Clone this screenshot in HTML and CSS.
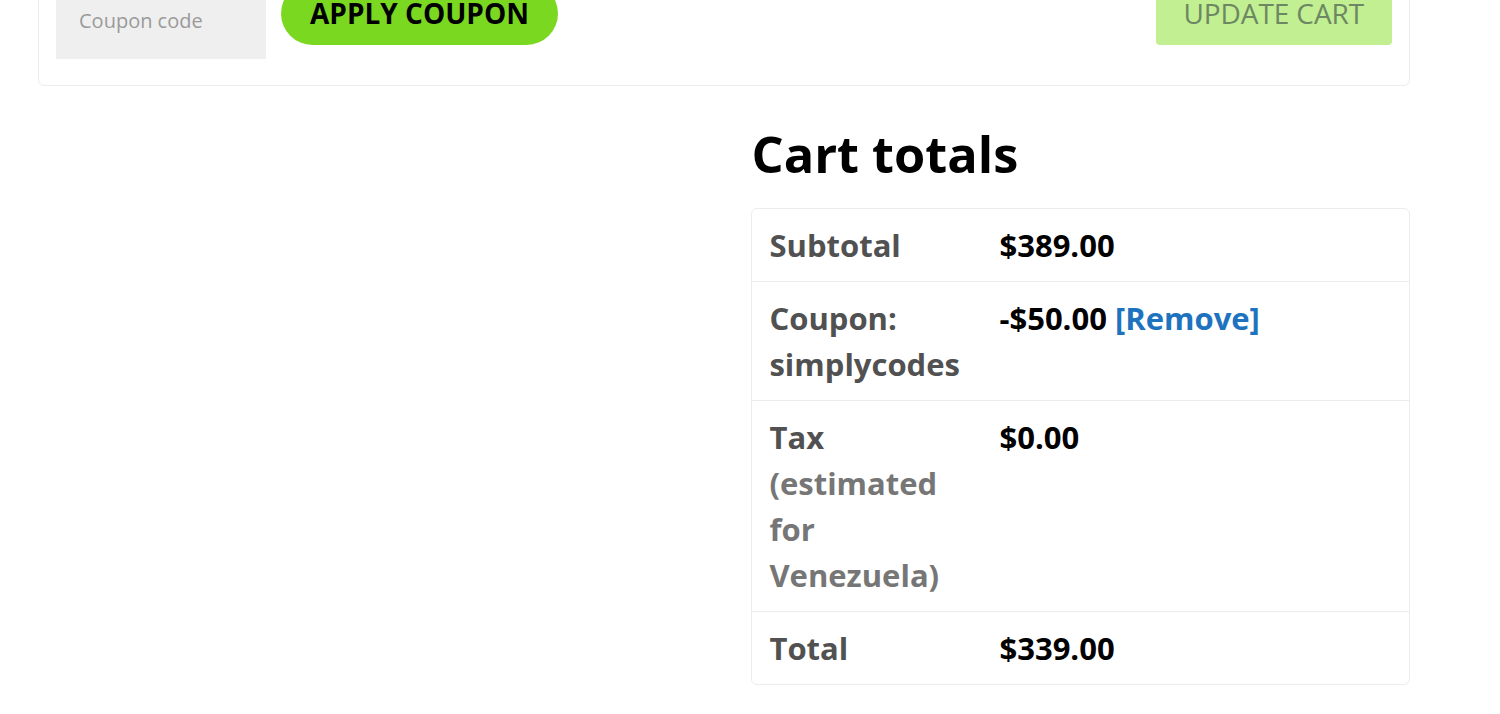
FILE: index.html
```html
<!DOCTYPE html>
<html lang="en">
<head>
<meta charset="utf-8">
<title>Cart</title>
<link rel="stylesheet" href="styles.css">
</head>
<body>
<div class="page">
  <div class="actions">
    <div class="coupon">
      <div class="coupon-input">Coupon code</div>
      <button class="btn btn-apply">APPLY COUPON</button>
    </div>
    <button class="btn btn-update">UPDATE CART</button>
  </div>
  <div class="collaterals">
    <div class="cart-totals">
      <h2 class="totals-title">Cart totals</h2>
      <table class="totals-table">
        <tr>
          <th>Subtotal</th>
          <td>$389.00</td>
        </tr>
        <tr>
          <th>Coupon: simplycodes</th>
          <td>-$50.00 <a class="remove" href="#">[Remove]</a></td>
        </tr>
        <tr>
          <th>Tax <span class="note">(estimated for Venezuela)</span></th>
          <td>$0.00</td>
        </tr>
        <tr>
          <th>Total</th>
          <td>$339.00</td>
        </tr>
      </table>
    </div>
  </div>
</div>
</body>
</html>
```

FILE: styles.css
```css
html, body {
  margin: 0;
  padding: 0;
  background: #fff;
  overflow: hidden;
}
body {
  font-family: "Open Sans", "Liberation Sans", sans-serif;
  color: #515151;
}
.page {
  margin-left: 38px;
  width: 1372px;
}
.actions {
  box-sizing: border-box;
  margin-top: -36px;
  border: 1px solid #ececec;
  border-radius: 6px;
  padding: 17px 17px 26px 17px;
  display: flex;
  justify-content: space-between;
  align-items: flex-start;
}
.coupon {
  display: flex;
  align-items: flex-start;
  gap: 15px;
}
.coupon-input {
  box-sizing: border-box;
  width: 210px;
  height: 77px;
  background: #efefef;
  color: #9a9a9a;
  font-size: 20px;
  padding: 0 0 28px 23px;
  display: flex;
  align-items: flex-end;
  line-height: 1;
}
.btn {
  font-family: "Open Sans", "Liberation Sans", sans-serif;
  font-size: 28px;
  line-height: 39px;
  border: none;
  padding: 12px 29px;
  margin: 0;
  cursor: pointer;
}
.btn-apply {
  background: #7bd821;
  color: #000;
  font-weight: 700;
  border-radius: 32px;
}
.btn-update {
  background: #c1ef92;
  color: #6d8762;
  font-weight: 400;
  border-radius: 4px;
  padding: 12px 28px;
  letter-spacing: -0.1px;
}
.collaterals {
  display: flex;
  justify-content: flex-end;
}
.cart-totals {
  width: 48%;
}
.totals-title {
  margin: 38px 0 23px 0;
  font-size: 50.5px;
  line-height: 1.2;
  font-weight: 700;
  color: #000;
}
.totals-table {
  width: 100%;
  border-collapse: separate;
  border-spacing: 0;
  border: 1px solid #ededed;
  border-radius: 6px;
  font-size: 31px;
  line-height: 46px;
}
.totals-table th,
.totals-table td {
  text-align: left;
  vertical-align: top;
  padding: 13px 17px;
  border-top: 1px solid #ededed;
}
.totals-table tr:first-child th,
.totals-table tr:first-child td {
  border-top: none;
}
.totals-table th {
  width: 196px;
  font-weight: 700;
  color: #515151;
}
.totals-table td {
  font-weight: 700;
  color: #000;
}
.note {
  color: #767676;
}
.remove {
  color: #1e73be;
  text-decoration: none;
}
```
